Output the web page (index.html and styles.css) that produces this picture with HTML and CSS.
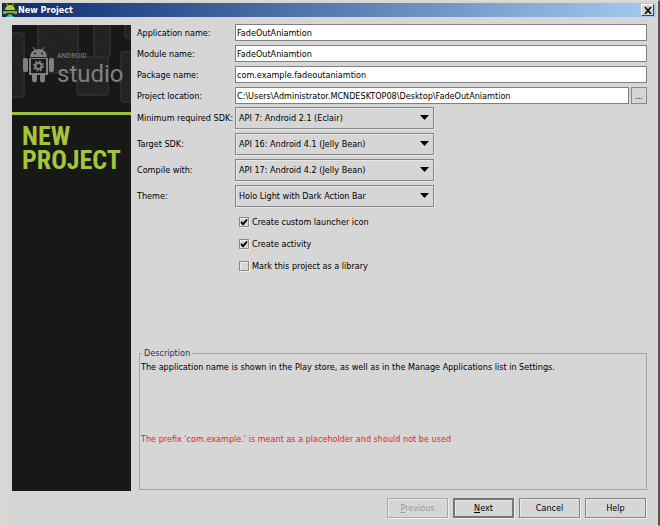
FILE: index.html
```html
<!DOCTYPE html>
<html lang="en">
<head>
<meta charset="utf-8">
<title>New Project</title>
<link rel="stylesheet" href="styles.css">
</head>
<body>
<main class="window">
  <header class="titlebar">
    <svg class="app-icon" viewBox="0 0 14 14" aria-hidden="true">
      <rect width="14" height="14" fill="#27301c"/>
      <path d="M2 7a5 5 0 0 1 10 0z" fill="#a9cf3c"/>
      <path d="M3.500 0.500l1.500 2.500M10.500 0.500l-1.500 2.500" stroke="#a9cf3c"/>
      <path d="M0 8h14v3h-3l-1-1h-6l-1 1h-3z" fill="#86a83a"/>
      <path d="M3 14l3-3h2l3 3z" fill="#39b5c4"/>
    </svg>
    <h1 class="title">New Project</h1>
    <button class="close" aria-label="Close"><svg viewBox="0 0 8 7" aria-hidden="true"><path d="M1 0l6 7M7 0l-6 7" stroke="#000" stroke-width="1.600"/></svg></button>
  </header>
  <div class="body">
    <aside class="sidebar">
      <div class="brand">
        <svg class="pattern" viewBox="0 0 119 87" aria-hidden="true">
          <defs>
            <pattern id="hatch" width="3" height="3" patternUnits="userSpaceOnUse">
              <rect width="3" height="3" fill="#1c1c1c"/><path d="M0 0l3 3" stroke="#303030" stroke-width="1"/>
            </pattern>
          </defs>
          <g fill="url(#hatch)" stroke="#2b2b2b" stroke-width="2">
            <rect x="-8" y="8" width="20" height="64" rx="3"/>
            <rect x="26" y="-8" width="40" height="56" rx="3"/>
            <rect x="82" y="-8" width="16" height="40" rx="3"/>
            <rect x="65" y="32" width="31" height="38" rx="3"/>
            <rect x="113" y="-8" width="16" height="21" rx="3"/>
            <rect x="109" y="27" width="20" height="50" rx="3"/>
          </g>
        </svg>
        <svg class="robot" viewBox="0 0 31 37" aria-hidden="true">
          <g fill="#808080">
            <path d="M7 11a8.500 8 0 0 1 17 0z"/>
            <path d="M10 1l2 3M21 1l-2 3" stroke="#808080"/>
            <rect y="12" width="5" height="14" rx="2"/>
            <rect x="26" y="12" width="5" height="14" rx="2"/>
            <path d="M6 12h19v17h-3v5a2 2 0 0 1-5 0v-5h-3v5a2 2 0 0 1-5 0v-5h-3z"/>
          </g>
          <circle cx="12" cy="7.500" r="1" fill="#1a1a1a"/><circle cx="19" cy="7.500" r="1" fill="#1a1a1a"/>
          <rect x="8" y="13" width="15" height="14" fill="#1a1a1a"/>
          <circle cx="15.500" cy="20" r="3" fill="none" stroke="#808080" stroke-width="2"/>
          <circle cx="15.500" cy="20" r="4.700" fill="none" stroke="#808080" stroke-width="1.800" stroke-dasharray="1.846 1.846"/>
        </svg>
        <div class="wordmark"><span class="word-small">ANDROID</span><span class="word-big">studio</span></div>
      </div>
      <h2 class="heading"><span>NEW</span><span>PROJECT</span></h2>
    </aside>
    <form class="form">
      <div class="fields">
        <label for="app">Application name:</label><input id="app" class="text" value="FadeOutAniamtion">
        <label for="mod">Module name:</label><input id="mod" class="text" value="FadeOutAniamtion">
        <label for="pkg">Package name:</label><input id="pkg" class="text" value="com.example.fadeoutaniamtion">
        <label for="loc">Project location:</label>
        <div class="browse-row"><input id="loc" class="text" value="C:\Users\Administrator.MCNDESKTOP08\Desktop\FadeOutAniamtion"><button type="button" class="browse" aria-label="Browse">...</button></div>
      </div>
      <div class="fields combos">
        <label for="min">Minimum required SDK:</label><div class="combo"><select id="min"><option>API 7: Android 2.1 (Eclair)</option></select></div>
        <label for="target">Target SDK:</label><div class="combo"><select id="target"><option>API 16: Android 4.1 (Jelly Bean)</option></select></div>
        <label for="compile">Compile with:</label><div class="combo"><select id="compile"><option>API 17: Android 4.2 (Jelly Bean)</option></select></div>
        <label for="theme">Theme:</label><div class="combo"><select id="theme"><option>Holo Light with Dark Action Bar</option></select></div>
      </div>
      <div class="checks">
        <label><input type="checkbox" checked>Create custom launcher icon</label>
        <label><input type="checkbox" checked>Create activity</label>
        <label><input type="checkbox">Mark this project as a library</label>
      </div>
      <fieldset class="description">
        <legend>Description</legend>
        <p>The application name is shown in the Play store, as well as in the Manage Applications list in Settings.</p>
        <p class="error">The prefix 'com.example.' is meant as a placeholder and should not be used</p>
      </fieldset>
    </form>
  </div>
  <footer class="footer">
    <button class="btn" disabled><u>P</u>revious</button>
    <button class="btn default"><u>N</u>ext</button>
    <button class="btn">Cancel</button>
    <button class="btn">Help</button>
  </footer>
</main>
</body>
</html>
```
FILE: styles.css
```css
* { box-sizing: border-box; }
body, button, input, select {
  font-family: "DejaVu Sans Condensed", "DejaVu Sans", sans-serif;
  font-size: 9px;
  color: #000;
}
body { margin: 0; background: #d6d6d6; }
h1, h2, p { margin: 0; }
.window {
  min-height: 100vh;
  display: flex;
  flex-direction: column;
  background: #d6d6d6;
  border: 1px solid #dedbd0;
  border-right: 2px solid #55564f;
  padding: 2px 2px 0 1px;
}
.titlebar {
  display: flex;
  align-items: center;
  height: 14px;
  padding: 0 2px 0 1px;
  background: linear-gradient(90deg, #0c2a70, #a6caf0);
}
.app-icon { width: 14px; height: 14px; }
.title { flex: 1; margin-left: 1px; font-size: 9px; color: #fff; }
.close {
  display: flex; align-items: center; justify-content: center;
  width: 13px; height: 12px; padding: 0;
  background: #d6d3cb;
  border: 1px solid; border-color: #fff #444 #444 #fff;
}
.close svg { width: 8px; height: 7px; }
.body { flex: 1; display: flex; gap: 6px; padding: 7px 9px 0 10px; }
.sidebar { width: 119px; margin-top: 1px; background: #181818; }
.brand {
  position: relative;
  display: flex;
  height: 90px;
  padding: 21px 0 0 11px;
  gap: 3px;
  border-bottom: 3px solid #9dc03c;
}
.pattern { position: absolute; left: 0; top: 0; width: 100%; height: 87px; }
.robot { position: relative; width: 31px; height: 37px; }
.wordmark { position: relative; display: flex; flex-direction: column; padding-top: 5px; color: #808080; font-family: Roboto, sans-serif; }
.word-small { font: 8px/9px "Liberation Sans Narrow", "Roboto Condensed", sans-serif; }
.word-big { font-size: 24px; line-height: 28px; }
.heading {
  display: flex;
  flex-direction: column;
  padding: 9px 0 0 10px;
  font: bold 26px/24px "Liberation Sans Narrow", "Roboto Condensed", sans-serif;
  color: #a4c639;
}
.form { flex: 1; display: flex; flex-direction: column; min-width: 0; }
.fields { display: grid; grid-template-columns: 98px 1fr; row-gap: 4px; align-items: center; white-space: nowrap; }
.text {
  width: 100%; min-width: 0; height: 17px; padding: 0 1px;
  background: #fff; border: 1px solid #808080; border-radius: 0; outline: 0;
}
.browse-row { display: flex; gap: 2px; }
.browse { flex: none; width: 16px; height: 17px; padding: 0; line-height: 8px; background: #d6d6d6; border: 1px solid #8a8a8a; }
.combos { margin-top: 3px; row-gap: 4px; }
.combo { position: relative; width: 199px; }
.combo::after {
  content: ""; position: absolute; right: 5px; top: 8px;
  width: 9px; height: 5px; background: #000;
  clip-path: polygon(0 0, 100% 0, 50% 100%);
  pointer-events: none;
}
select {
  display: block; appearance: none; width: 100%; height: 22px; padding: 0 3px;
  background: #d6d6d6; border: 1px solid #868686; border-radius: 0;
  box-shadow: inset 1px 1px #e8e8e8, 1px 1px #e8e8e8;
}
.checks { display: flex; flex-direction: column; align-items: flex-start; gap: 8px; margin: 8px 0 0 102px; }
.checks label { display: flex; align-items: center; gap: 3px; height: 14px; }
.checks input {
  appearance: none; width: 10px; height: 10px; margin: 0;
  border: 1px solid #888; box-shadow: 1px 1px #eee, inset 1px 1px #eee;
}
.checks input:checked::before {
  content: ""; display: block; width: 8px; height: 8px; background: #000;
  clip-path: polygon(10% 35%, 35% 55%, 90% 5%, 90% 35%, 40% 95%, 10% 70%);
}
.description {
  height: 144px; min-width: 0; margin: auto 0 1px 2px; padding: 0 1px;
  border: 1px solid #a4a4a4;
}
legend { padding: 0 2px; margin-left: 1px; line-height: 14px; color: #1f3168; }
.description p { line-height: 14px; }
.description .error { margin-top: 58px; color: #ee1c24; }
.footer { display: flex; justify-content: flex-end; gap: 5px; padding: 7px 10px 7px; }
.btn {
  width: 61px; height: 20px; padding: 0;
  background: #d6d6d6; border: 1px solid #868686; border-radius: 0;
  box-shadow: inset 1px 1px #e8e8e8, 1px 1px #eee;
}
.btn:disabled { color: #999; border-color: #aaa; }
.btn.default { border: 2px solid #777; }
```
